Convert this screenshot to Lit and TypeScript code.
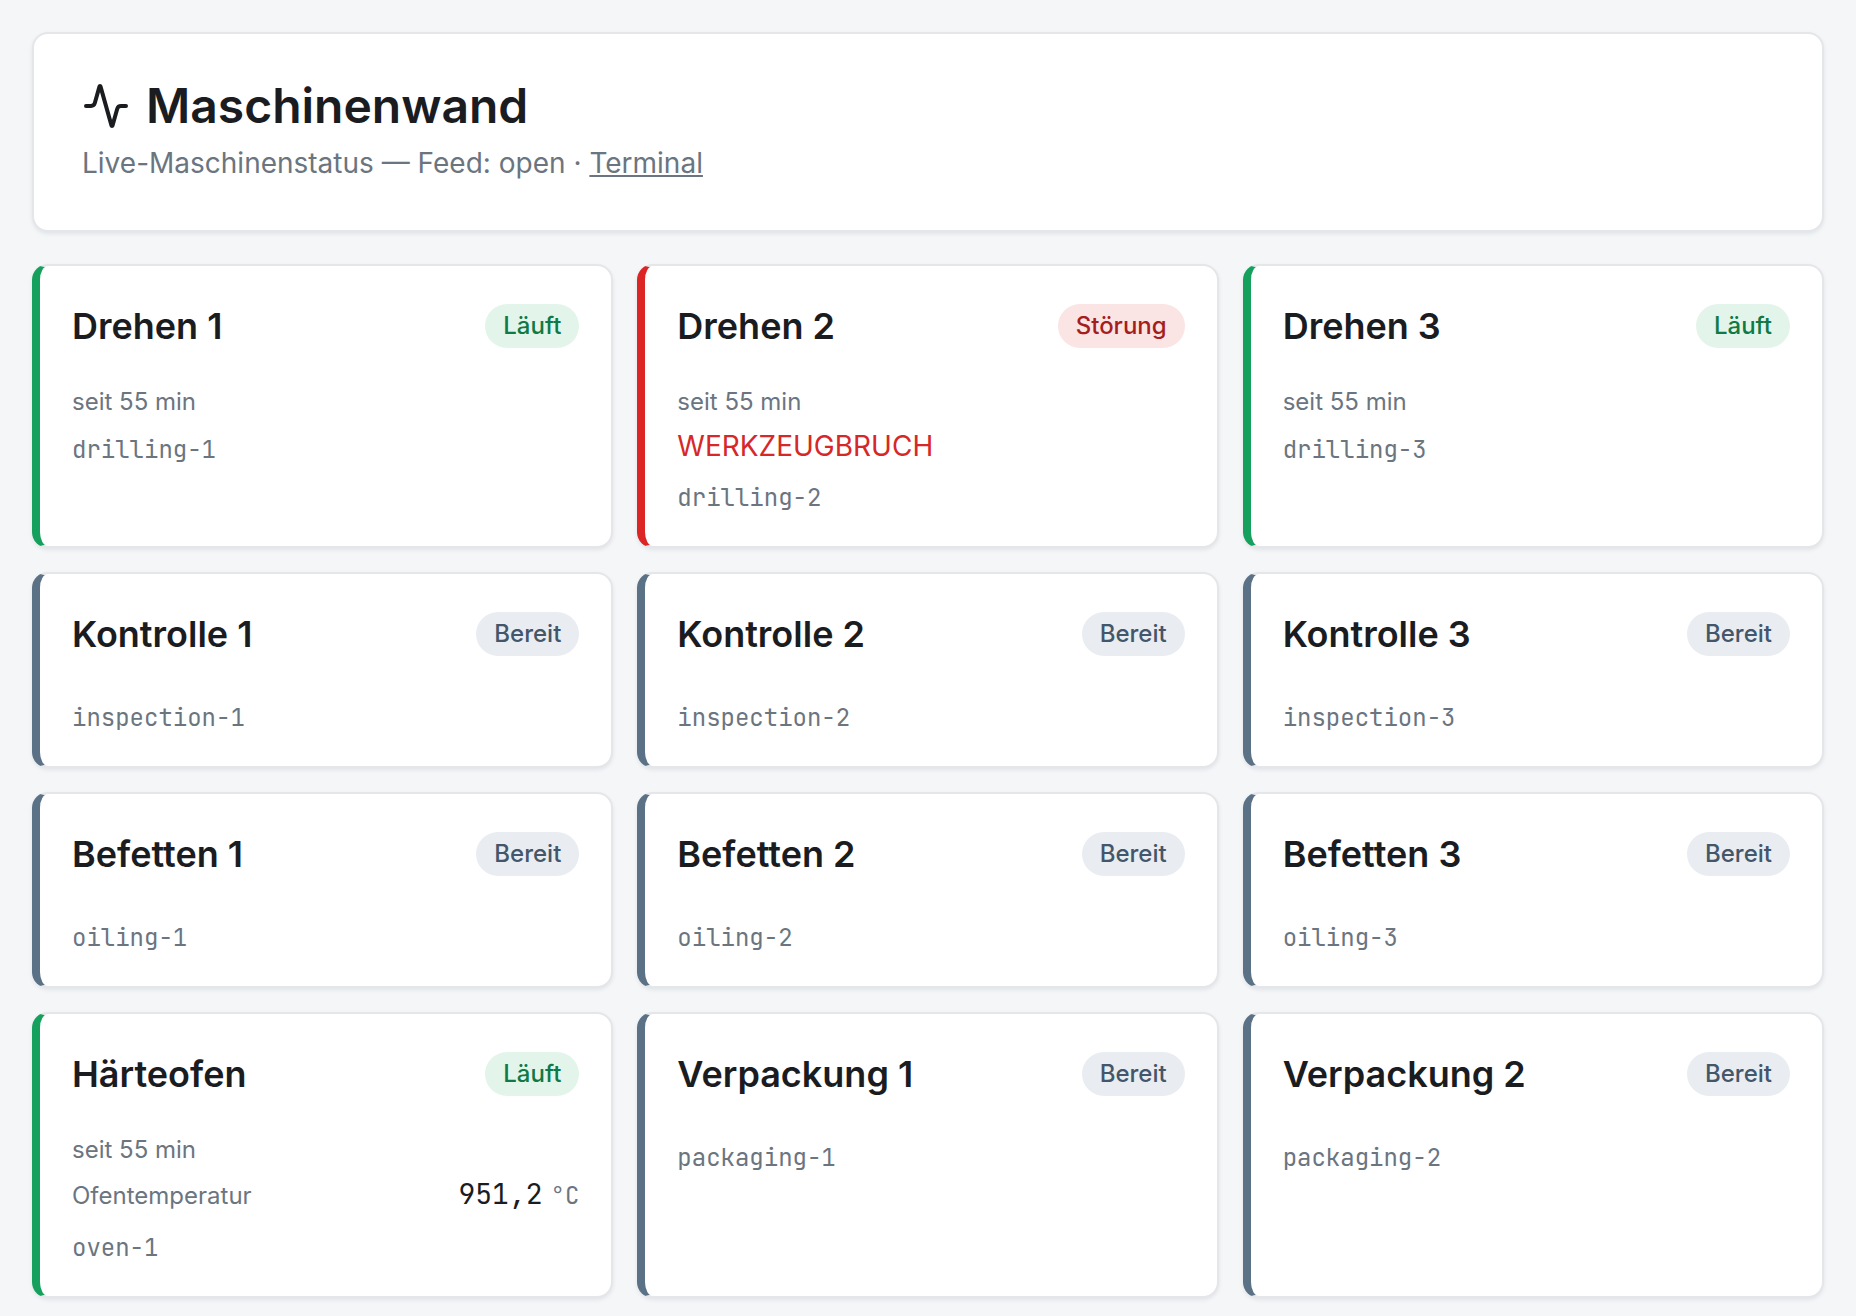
import { LitElement, html, css, nothing } from "lit";
import { customElement, property } from "lit/decorators.js";

type Status = "running" | "fault" | "ready";

interface Machine {
  id: string;
  name: string;
  status: Status;
  since?: string;
  fault?: string;
  reading?: { label: string; value: string; unit: string };
}

const STATUS_LABEL: Record<Status, string> = {
  running: "Läuft",
  fault: "Störung",
  ready: "Bereit",
};

const MACHINES: Machine[] = [
  { id: "drilling-1", name: "Drehen 1", status: "running", since: "seit 55 min" },
  { id: "drilling-2", name: "Drehen 2", status: "fault", since: "seit 55 min", fault: "WERKZEUGBRUCH" },
  { id: "drilling-3", name: "Drehen 3", status: "running", since: "seit 55 min" },
  { id: "inspection-1", name: "Kontrolle 1", status: "ready" },
  { id: "inspection-2", name: "Kontrolle 2", status: "ready" },
  { id: "inspection-3", name: "Kontrolle 3", status: "ready" },
  { id: "oiling-1", name: "Befetten 1", status: "ready" },
  { id: "oiling-2", name: "Befetten 2", status: "ready" },
  { id: "oiling-3", name: "Befetten 3", status: "ready" },
  {
    id: "oven-1",
    name: "Härteofen",
    status: "running",
    since: "seit 55 min",
    reading: { label: "Ofentemperatur", value: "951,2", unit: "°C" },
  },
  { id: "packaging-1", name: "Verpackung 1", status: "ready" },
  { id: "packaging-2", name: "Verpackung 2", status: "ready" },
];

@customElement("machine-card")
export class MachineCard extends LitElement {
  @property({ attribute: false }) machine!: Machine;

  static styles = css`
    :host {
      display: block;
    }
    .card {
      box-sizing: border-box;
      display: flex;
      flex-direction: column;
      height: 100%;
      padding: 32px;
      background: #ffffff;
      border: 2px solid #e4e6e9;
      border-left-width: 8px;
      border-radius: 16px;
      box-shadow: 0 2px 4px rgba(16, 24, 40, 0.08);
    }
    .running {
      border-left-color: #16a05d;
    }
    .fault {
      border-left-color: #dc2626;
    }
    .ready {
      border-left-color: #5b7186;
    }
    .head {
      display: flex;
      align-items: center;
      justify-content: space-between;
      gap: 16px;
      margin-bottom: 28px;
    }
    .name {
      margin: 0;
      font-size: 36px;
      font-weight: 600;
      line-height: 56px;
      color: #1a1c1f;
    }
    .badge {
      padding: 4px 18px;
      border-radius: 22px;
      font-size: 24px;
      font-weight: 500;
      line-height: 36px;
    }
    .badge-running {
      background: #e3f5eb;
      color: #0f7a45;
    }
    .badge-fault {
      background: #fbe4e4;
      color: #a51d1d;
    }
    .badge-ready {
      background: #e9edf1;
      color: #43566a;
    }
    .since {
      margin: 0;
      font-size: 24px;
      line-height: 40px;
      color: #6b7580;
    }
    .message {
      margin: 0;
      font-size: 28px;
      line-height: 48px;
      color: #d62828;
    }
    .reading {
      display: flex;
      align-items: baseline;
      justify-content: space-between;
      line-height: 48px;
    }
    .label {
      font-size: 24px;
      color: #6b7580;
    }
    .value {
      font-family: "JetBrains Mono", "Liberation Mono", monospace;
      font-size: 28px;
      color: #1a1c1f;
    }
    .unit {
      margin-left: 8px;
      font-size: 24px;
      color: #6b7580;
    }
    .code {
      margin: 12px 0 0;
      font-family: "JetBrains Mono", "Liberation Mono", monospace;
      font-size: 24px;
      line-height: 32px;
      color: #6b7580;
    }
  `;

  render() {
    const m = this.machine;
    return html`
      <article class="card ${m.status}">
        <header class="head">
          <h2 class="name">${m.name}</h2>
          <span class="badge badge-${m.status}">${STATUS_LABEL[m.status]}</span>
        </header>
        ${m.since ? html`<p class="since">${m.since}</p>` : nothing}
        ${m.fault ? html`<p class="message">${m.fault}</p>` : nothing}
        ${m.reading
          ? html`<div class="reading">
              <span class="label">${m.reading.label}</span>
              <span class="value">${m.reading.value}<span class="unit">${m.reading.unit}</span></span>
            </div>`
          : nothing}
        <p class="code">${m.id}</p>
      </article>
    `;
  }
}

@customElement("app-root")
export class AppRoot extends LitElement {
  static styles = css`
    :host {
      display: block;
      box-sizing: border-box;
      min-height: 100vh;
      padding: 32px 32px 20px;
      background: #f4f6f8;
      font-family: Inter, "Liberation Sans", sans-serif;
    }
    .intro {
      margin-bottom: 32px;
      padding: 44px 48px 46px;
      background: #ffffff;
      border: 2px solid #e4e6e9;
      border-radius: 16px;
      box-shadow: 0 2px 4px rgba(16, 24, 40, 0.08);
    }
    .title {
      display: flex;
      align-items: center;
      gap: 16px;
      margin: 0;
      font-size: 48px;
      font-weight: 600;
      line-height: 56px;
      color: #1a1c1f;
    }
    .icon {
      width: 48px;
      height: 48px;
      fill: none;
      stroke: currentColor;
      stroke-width: 2;
      stroke-linecap: round;
      stroke-linejoin: round;
    }
    .subtitle {
      margin: 8px 0 0;
      font-size: 28px;
      line-height: 42px;
      color: #6b7580;
    }
    .link {
      color: inherit;
      text-decoration: underline;
    }
    .wall {
      display: grid;
      grid-template-columns: repeat(3, minmax(0, 1fr));
      gap: 24px;
    }
  `;

  render() {
    return html`
      <header class="intro">
        <h1 class="title">
          <svg class="icon" viewBox="0 0 24 24" aria-hidden="true">
            <path
              d="M22 12h-2.48a2 2 0 0 0-1.93 1.46l-2.35 8.36a.25.25 0 0 1-.48 0L9.24 2.18a.25.25 0 0 0-.48 0l-2.35 8.36A2 2 0 0 1 4.49 12H2"
            />
          </svg>
          Maschinenwand
        </h1>
        <p class="subtitle">Live-Maschinenstatus — Feed: open · <a class="link" href="#terminal">Terminal</a></p>
      </header>
      <main class="wall">${MACHINES.map((m) => html`<machine-card .machine=${m}></machine-card>`)}</main>
    `;
  }
}
